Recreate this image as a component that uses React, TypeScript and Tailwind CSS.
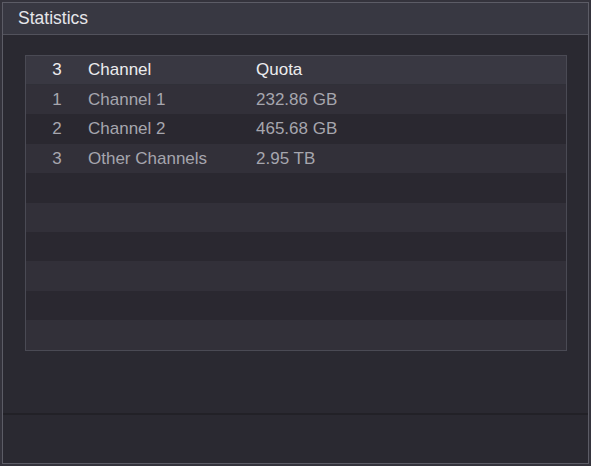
const rows = [
  { no: '1', name: 'Channel 1', quota: '232.86 GB' },
  { no: '2', name: 'Channel 2', quota: '465.68 GB' },
  { no: '3', name: 'Other Channels', quota: '2.95 TB' },
  null,
  null,
  null,
  null,
  null,
  null,
]

export default function App() {
  return (
    <div
      className="w-[591px] h-[466px] bg-[#34333c] pt-[2px] pl-[2px] pr-[2px] overflow-hidden"
      style={{ fontFamily: '"Liberation Sans", Arial, sans-serif' }}
    >
      <div className="h-[462px] flex flex-col border border-[#5c5c66] bg-[#2a2931]">
        {/* title bar */}
        <div className="h-[32px] shrink-0 bg-[#383842] border-b border-[#52525c] flex items-center pl-[15px] pt-[1px]">
          <span className="text-[17.5px] text-[#e6e6ea] leading-none">Statistics</span>
        </div>

        {/* body */}
        <div className="flex-1 pt-[20px] px-[22px]">
          <div className="border border-[#4a4a54] w-[542px]">
            <div className="h-[29px] bg-[#393842] flex items-center text-[17px] text-[#ececee] border-b border-[#303038]">
              <div className="w-[62px] text-center">3</div>
              <div className="w-[168px]">Channel</div>
              <div>Quota</div>
            </div>
            {rows.map((r, i) => (
              <div
                key={i}
                className={
                  'h-[29.4px] flex items-center text-[17px] text-[#a6a6ae] ' +
                  (i % 2 === 0 ? 'bg-[#323039]' : 'bg-[#2a2830]')
                }
              >
                {r && (
                  <>
                    <div className="w-[62px] text-center">{r.no}</div>
                    <div className="w-[168px]">{r.name}</div>
                    <div>{r.quota}</div>
                  </>
                )}
              </div>
            ))}
          </div>
        </div>

        {/* footer */}
        <div className="h-[50px] shrink-0 border-t-2 border-[#222127] bg-[#2a2931]" />
      </div>
    </div>
  )
}
